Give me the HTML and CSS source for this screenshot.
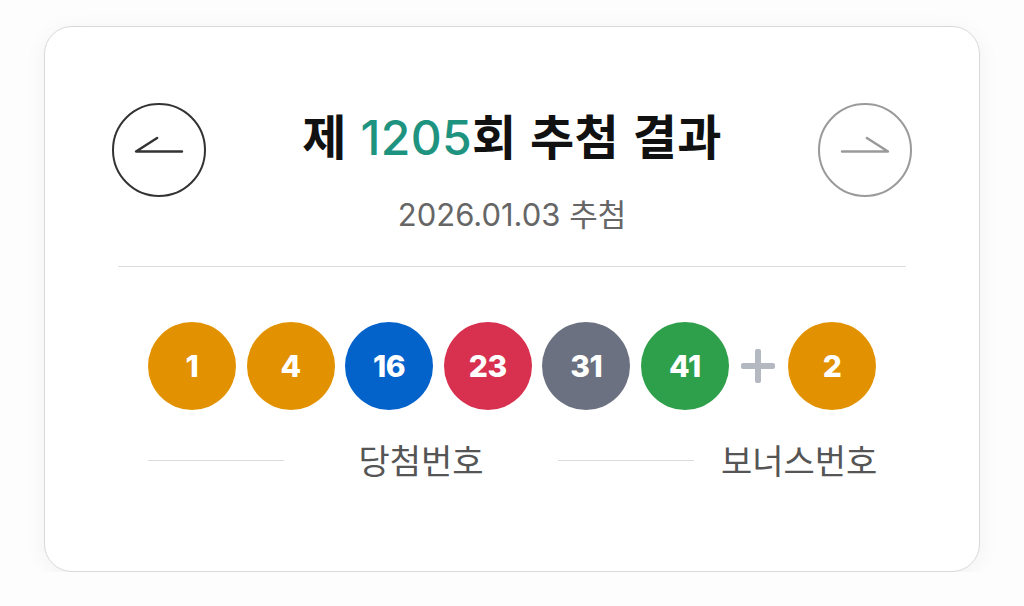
FILE: index.html
```html
<!DOCTYPE html>
<html lang="ko">
<head>
<meta charset="utf-8">
<title>제 1205회 추첨 결과</title>
<link rel="stylesheet" href="styles.css">
</head>
<body>
<div class="card">
  <div class="header">
    <button class="nav nav-prev" aria-label="이전 회차">
      <svg width="94" height="94" viewBox="0 0 94 94"><path d="M45 34.5 L23 48.5 L71 48.5" fill="none" stroke="#333" stroke-width="2.6" stroke-linecap="round" stroke-linejoin="round"/></svg>
    </button>
    <div class="heading">
      <h1 class="title">제 <span class="round">1205</span>회 추첨 결과</h1>
      <p class="date">2026.01.03 추첨</p>
    </div>
    <button class="nav nav-next" aria-label="다음 회차">
      <svg width="94" height="94" viewBox="0 0 94 94"><path d="M49 34.5 L71 48.5 L23 48.5" fill="none" stroke="#9a9a9a" stroke-width="2.6" stroke-linecap="round" stroke-linejoin="round"/></svg>
    </button>
  </div>
  <hr class="divider">
  <div class="balls">
    <span class="ball yellow">1</span>
    <span class="ball yellow">4</span>
    <span class="ball blue">16</span>
    <span class="ball red">23</span>
    <span class="ball gray">31</span>
    <span class="ball green">41</span>
    <span class="plus" aria-hidden="true"></span>
    <span class="ball yellow">2</span>
  </div>
  <div class="labels">
    <div class="label-group main">
      <span class="label-line"></span>
      <span class="label-text">당첨번호</span>
    </div>
    <div class="label-group bonus">
      <span class="label-line"></span>
      <span class="label-text">보너스번호</span>
    </div>
  </div>
</div>
</body>
</html>
```
FILE: styles.css
```css
* { box-sizing: border-box; }
html, body {
  margin: 0;
  padding: 0;
  background: #fdfdfd;
}
body {
  font-family: "Noto Sans CJK KR", "Noto Sans", sans-serif;
  padding: 26px 44px 0;
}
.card {
  width: 936px;
  height: 546px;
  background: #fff;
  border: 1.5px solid #d9d9d9;
  border-radius: 28px;
  box-shadow: 0 4px 22px rgba(0, 0, 0, 0.05);
  padding: 76px 67px 0;
  display: flex;
  flex-direction: column;
}
.header {
  display: flex;
  align-items: flex-start;
  justify-content: space-between;
}
.nav {
  width: 94px;
  height: 94px;
  border-radius: 50%;
  background: #fff;
  padding: 0;
  display: flex;
  align-items: center;
  justify-content: center;
  cursor: pointer;
  flex-shrink: 0;
}
.nav-prev { border: 2px solid #333; }
.nav-next { border: 2px solid #9a9a9a; }
.heading {
  flex: 1;
  text-align: center;
}
.title {
  margin: 0;
  font-size: 48px;
  font-weight: 700;
  line-height: 62px;
  color: #111;
  letter-spacing: 0.3px;
}
.round {
  color: #1e9480;
  font-family: "Inter", "Noto Sans", sans-serif;
  font-weight: 500;
}
.date {
  margin: 27px 0 0;
  font-family: "Inter", "Noto Sans CJK KR", sans-serif;
  font-size: 31px;
  line-height: 38px;
  color: #666;
}
.divider {
  margin: 32px 6px 0;
  border: 0;
  border-top: 1.5px solid #dedede;
  height: 0;
}
.balls {
  margin-top: 55px;
  display: flex;
  align-items: center;
  justify-content: center;
  gap: 10.6px;
}
.ball {
  width: 88px;
  height: 88px;
  border-radius: 50%;
  display: flex;
  align-items: center;
  justify-content: center;
  color: #fff;
  font-family: "Inter", "Roboto", sans-serif;
  font-weight: 800;
  font-size: 30px;
  letter-spacing: -0.5px;
}
.yellow { background: #e29200; }
.blue { background: #0462cb; }
.red { background: #d8304f; }
.gray { background: #6b7180; }
.green { background: #2e9f4a; }
.plus {
  position: relative;
  width: 38px;
  height: 38px;
}
.plus::before,
.plus::after {
  content: "";
  position: absolute;
  background: #b4b8c1;
  border-radius: 2px;
}
.plus::before {
  left: 2px; right: 2px;
  top: 16px; height: 6px;
}
.plus::after {
  top: 2px; bottom: 2px;
  left: 16px; width: 6px;
}
.labels {
  margin-top: 28px;
  display: flex;
  padding-left: 36px;
}
.label-group {
  display: flex;
  align-items: center;
}
.label-group.main { width: 410px; }
.label-line {
  width: 136px;
  height: 0;
  border-top: 1.5px solid #dcdcdc;
}
.label-text {
  font-size: 34px;
  line-height: 44px;
  color: #555;
}
.main .label-text {
  flex: 1;
  text-align: center;
}
.bonus .label-text {
  margin-left: 27px;
}
```
